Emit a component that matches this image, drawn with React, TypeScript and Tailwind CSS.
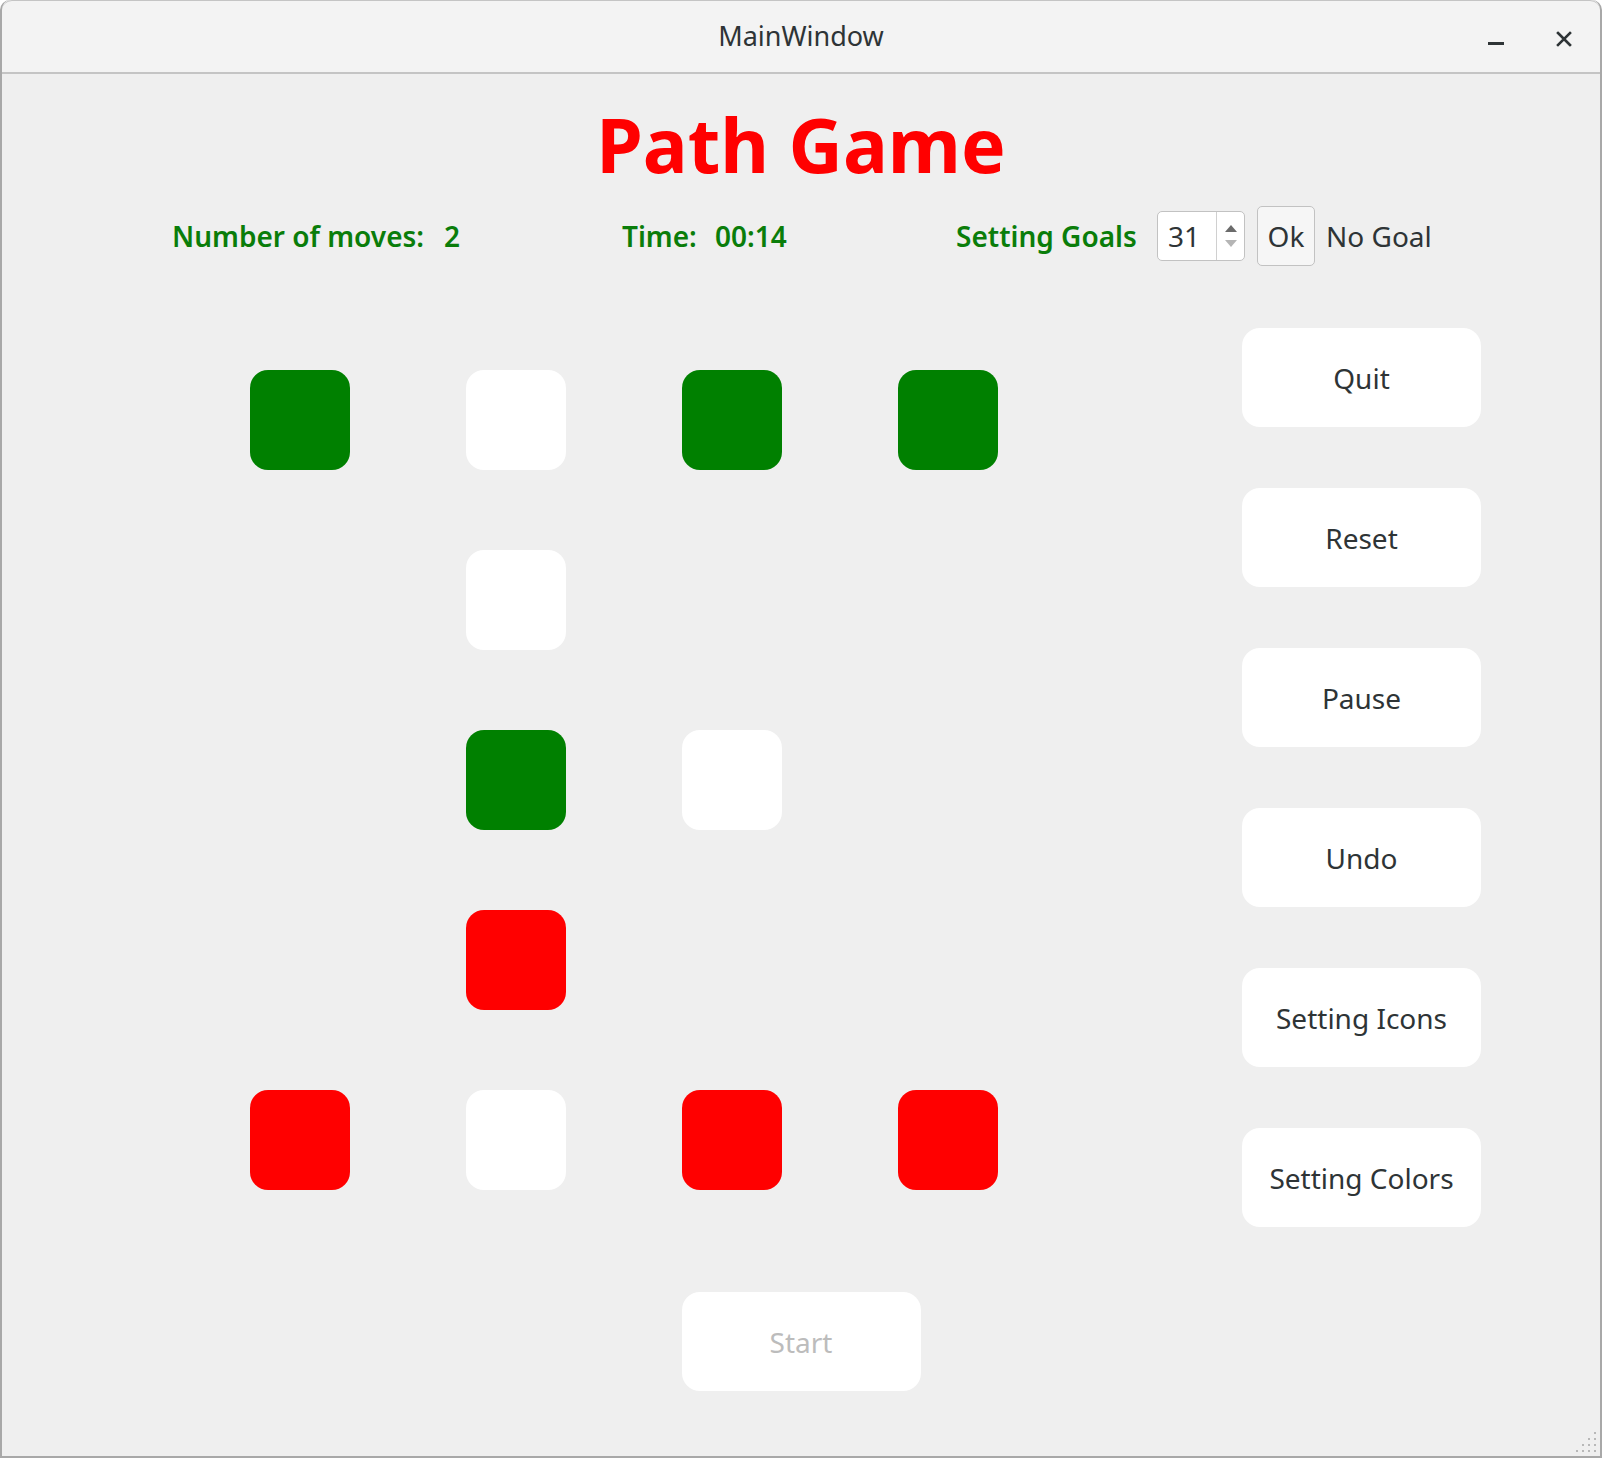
import React from "react";

const FONT = { fontFamily: '"Noto Sans", "Open Sans", sans-serif' };

type Cell = "g" | "w" | "r" | null;
const grid: Cell[][] = [
  ["g", "w", "g", "g"],
  [null, "w", null, null],
  [null, "g", "w", null],
  [null, "r", null, null],
  ["r", "w", "r", "r"],
];

function Tile({ c }: { c: Cell }) {
  if (!c) return <div className="w-[100px] h-[100px]" />;
  const cls =
    c === "g" ? "bg-[#008000]" : c === "r" ? "bg-[#ff0000]" : "bg-white";
  return <div className={`w-[100px] h-[100px] rounded-[18px] ${cls}`} />;
}

function Btn({ label, disabled }: { label: string; disabled?: boolean }) {
  return (
    <div
      className={`w-[239px] h-[99px] rounded-[18px] bg-white flex items-center justify-center text-[28px] ${
        disabled ? "text-[#bcbcbc]" : "text-[#2e3436]"
      }`}
    >
      {label}
    </div>
  );
}

export default function App() {
  return (
    <div
      className="w-[1602px] h-[1458px] bg-[#efefef] flex flex-col overflow-hidden border-x-2 border-b-2 border-[#a8a8a8] rounded-t-[10px] relative"
      style={FONT}
    >
      {/* title bar */}
      <div className="h-[74px] shrink-0 bg-[#f3f3f3] border-b-2 border-[#b9b9b9] flex items-center justify-center relative rounded-t-[10px] border-t border-[#c4c4c4]">
        <span className="text-[27px] text-[#2e3436]">MainWindow</span>
        <div className="absolute right-[96px] top-[41px] w-[16px] h-[3px] bg-[#2e3436]" />
        <svg
          className="absolute right-[28px] top-[30px]"
          width="16"
          height="16"
          viewBox="0 0 16 16"
        >
          <path
            d="M2 2 L14 14 M14 2 L2 14"
            stroke="#2e3436"
            strokeWidth="2.6"
            strokeLinecap="square"
          />
        </svg>
      </div>

      {/* heading */}
      <div className="flex justify-center mt-[22px]">
        <h1 className="text-[75px] font-bold leading-[96px] text-[#ff0000]">
          Path Game
        </h1>
      </div>

      {/* stats row */}
      <div className="grid grid-cols-[272px_178px_93px_241px_201px_100px_69px_auto] items-center h-[60px] mt-[14px] pl-[170px] text-[28px] font-semibold text-[#0a7d0a]">
        <span>Number of moves:</span>
        <span>2</span>
        <span>Time:</span>
        <span>00:14</span>
        <span>Setting Goals</span>
        <div className="w-[88px] h-[50px] bg-white border border-[#c2c2c2] rounded-[5px] flex font-normal text-[#2e3436]">
          <div className="flex-1 flex items-center pl-[10px] text-[28px]">31</div>
          <div className="w-[28px] border-l border-[#d0d0d0] flex flex-col items-center justify-center gap-[8px]">
            <svg width="12" height="7" viewBox="0 0 12 7">
              <path d="M0 7 L6 0 L12 7 Z" fill="#6b6b6b" />
            </svg>
            <svg width="12" height="7" viewBox="0 0 12 7">
              <path d="M0 0 L6 7 L12 0 Z" fill="#b5b5b5" />
            </svg>
          </div>
        </div>
        <div className="w-[58px] h-[60px] bg-[#f6f6f6] border border-[#c2c2c2] rounded-[5px] flex items-center justify-center font-normal text-[28px] text-[#2e3436]">
          Ok
        </div>
        <span className="font-normal text-[#2e3436]">No Goal</span>
      </div>

      {/* board + buttons */}
      <div className="flex mt-[62px]">
        <div className="pl-[248px] pt-[42px]">
          <div className="grid grid-cols-[repeat(4,100px)] auto-rows-[100px] gap-x-[116px] gap-y-[80px]">
            {grid.flat().map((c, i) => (
              <Tile key={i} c={c} />
            ))}
          </div>
        </div>
        <div className="ml-[244px] flex flex-col gap-[61px]">
          <Btn label="Quit" />
          <Btn label="Reset" />
          <Btn label="Pause" />
          <Btn label="Undo" />
          <Btn label="Setting Icons" />
          <Btn label="Setting Colors" />
        </div>
      </div>

      <div className="flex justify-center mt-[65px]">
        <Btn label="Start" disabled />
      </div>

      {/* resize grip */}
      <div className="absolute right-[4px] bottom-[4px] grid grid-cols-4 gap-[4px]">
        {[0, 0, 0, 1, 0, 0, 1, 1, 0, 1, 1, 1, 1, 1, 1, 1].map((v, i) => (
          <div
            key={i}
            className={`w-[2px] h-[2px] ${v ? "bg-[#b8b8b8]" : "bg-transparent"}`}
          />
        ))}
      </div>
    </div>
  );
}
